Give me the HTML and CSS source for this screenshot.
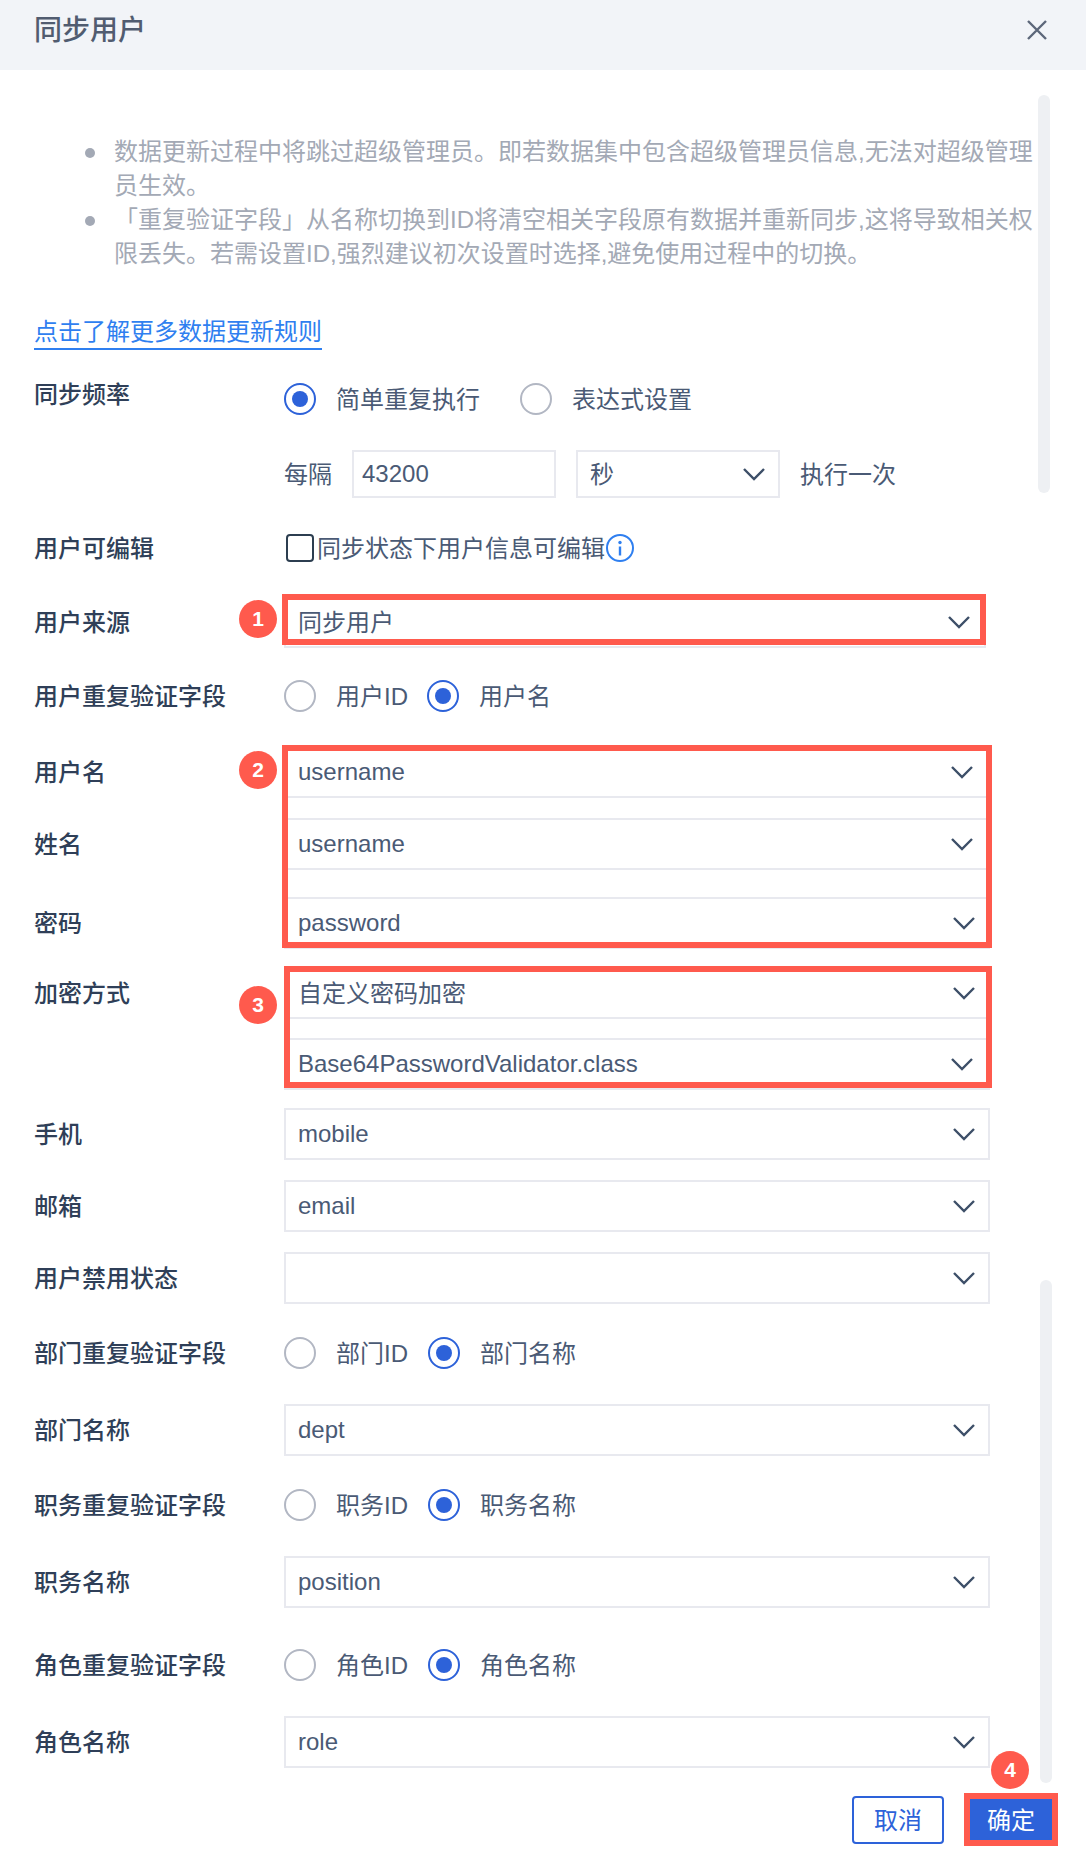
FILE: index.html
```html
<!DOCTYPE html>
<html lang="zh-CN">
<head>
<meta charset="utf-8">
<title>同步用户</title>
<link rel="stylesheet" href="styles.css">
</head>
<body>
<svg class="defs" width="0" height="0" aria-hidden="true">
  <symbol id="chev" viewBox="0 0 24 14"><path d="M2 2 L12 12 L22 2" fill="none" stroke="currentColor" stroke-width="2.4"/></symbol>
</svg>
<div class="dialog">
  <header class="head">
    <h1 class="title">同步用户</h1>
    <svg class="close" viewBox="0 0 22 22"><path d="M2 2 L20 20 M20 2 L2 20" fill="none" stroke="currentColor" stroke-width="2.4"/></svg>
  </header>
  <main class="body">
    <ul class="notes">
      <li>数据更新过程中将跳过超级管理员。即若数据集中包含超级管理员信息,无法对超级管理员生效。</li>
      <li>「重复验证字段」从名称切换到ID将清空相关字段原有数据并重新同步,这将导致相关权限丢失。若需设置ID,强烈建议初次设置时选择,避免使用过程中的切换。</li>
    </ul>
    <a class="more">点击了解更多数据更新规则</a>

    <div class="row m28 tall">
      <span class="label up">同步频率</span>
      <div class="radios wide">
        <label class="radio"><i class="dot on"></i><span class="cn">简单重复执行</span></label>
        <label class="radio"><i class="dot"></i><span class="cn">表达式设置</span></label>
      </div>
    </div>
    <div class="row m31 freq">
      <span class="label"></span>
      <div class="freq-line">
        <span class="cn">每隔</span>
        <div class="field num">43200</div>
        <div class="field unit"><span class="cn">秒</span><svg class="chev"><use href="#chev"/></svg></div>
        <span class="cn">执行一次</span>
      </div>
    </div>
    <div class="row m30 tall">
      <span class="label">用户可编辑</span>
      <div class="check">
        <i class="box"></i><span class="cn">同步状态下用户信息可编辑</span>
        <svg class="info" viewBox="0 0 28 28"><circle cx="14" cy="14" r="13" fill="none" stroke="currentColor" stroke-width="2"/><circle cx="14" cy="8.5" r="1.7" fill="currentColor"/><path d="M14 12.5 V21.5" stroke="currentColor" stroke-width="2.4"/></svg>
      </div>
    </div>
    <div class="row m28">
      <span class="label">用户来源</span>
      <div class="field select short"><span class="cn">同步用户</span><svg class="chev"><use href="#chev"/></svg></div>
    </div>
    <div class="row m28 tall">
      <span class="label">用户重复验证字段</span>
      <div class="radios narrow">
        <label class="radio"><i class="dot"></i><span class="cn">用户ID</span></label>
        <label class="radio"><i class="dot on"></i><span class="cn">用户名</span></label>
      </div>
    </div>
    <div class="row m30">
      <span class="label">用户名</span>
      <div class="field select inset">username<svg class="chev"><use href="#chev"/></svg></div>
    </div>
    <div class="row m20">
      <span class="label">姓名</span>
      <div class="field select inset">username<svg class="chev"><use href="#chev"/></svg></div>
    </div>
    <div class="row m27">
      <span class="label">密码</span>
      <div class="field select">password<svg class="chev"><use href="#chev"/></svg></div>
    </div>
    <div class="row m18">
      <span class="label">加密方式</span>
      <div class="field select"><span class="cn">自定义密码加密</span><svg class="chev"><use href="#chev"/></svg></div>
    </div>
    <div class="row m19">
      <span class="label"></span>
      <div class="field select inset">Base64PasswordValidator.class<svg class="chev"><use href="#chev"/></svg></div>
    </div>
    <div class="row m18">
      <span class="label">手机</span>
      <div class="field select">mobile<svg class="chev"><use href="#chev"/></svg></div>
    </div>
    <div class="row m20">
      <span class="label">邮箱</span>
      <div class="field select">email<svg class="chev"><use href="#chev"/></svg></div>
    </div>
    <div class="row m20">
      <span class="label">用户禁用状态</span>
      <div class="field select"><svg class="chev"><use href="#chev"/></svg></div>
    </div>
    <div class="row m29 tall">
      <span class="label">部门重复验证字段</span>
      <div class="radios">
        <label class="radio"><i class="dot"></i><span class="cn">部门ID</span></label>
        <label class="radio"><i class="dot on"></i><span class="cn">部门名称</span></label>
      </div>
    </div>
    <div class="row m31">
      <span class="label">部门名称</span>
      <div class="field select">dept<svg class="chev"><use href="#chev"/></svg></div>
    </div>
    <div class="row m29 tall">
      <span class="label">职务重复验证字段</span>
      <div class="radios">
        <label class="radio"><i class="dot"></i><span class="cn">职务ID</span></label>
        <label class="radio"><i class="dot on"></i><span class="cn">职务名称</span></label>
      </div>
    </div>
    <div class="row m31">
      <span class="label">职务名称</span>
      <div class="field select">position<svg class="chev"><use href="#chev"/></svg></div>
    </div>
    <div class="row m37 tall">
      <span class="label">角色重复验证字段</span>
      <div class="radios">
        <label class="radio"><i class="dot"></i><span class="cn">角色ID</span></label>
        <label class="radio"><i class="dot on"></i><span class="cn">角色名称</span></label>
      </div>
    </div>
    <div class="row m31">
      <span class="label">角色名称</span>
      <div class="field select">role<svg class="chev"><use href="#chev"/></svg></div>
    </div>
    <footer class="foot">
      <button class="btn ghost">取消</button>
      <button class="btn primary">确定</button>
    </footer>
  </main>

  <div class="scroll s1"></div>
  <div class="scroll s2"></div>

  <div class="mark m-1"></div>
  <div class="mark m-2"></div>
  <div class="mark m-3"></div>
  <div class="mark m-4"></div>
  <div class="badge b-1">1</div>
  <div class="badge b-2">2</div>
  <div class="badge b-3">3</div>
  <div class="badge b-4">4</div>
</div>
</body>
</html>
```
FILE: styles.css
```css
* { box-sizing: border-box; }
html, body { margin: 0; padding: 0; background: #fff; }
body {
  font-family: "Liberation Sans", "Noto Sans CJK SC", sans-serif;
  font-size: 24px;
  color: #4a5a75;
}
.defs { position: absolute; }
.dialog { position: relative; width: 1086px; height: 1854px; overflow: hidden; background: #fff; }

.head {
  height: 70px;
  background: #f2f4f8;
  display: flex;
  align-items: center;
  justify-content: space-between;
  padding: 0 38px 0 34px;
}
.title { margin: 0 0 8px; font-size: 28px; font-weight: 500; color: #515c70; line-height: 40px; }
.close { width: 22px; height: 22px; color: #5d677a; margin-bottom: 10px; }

.body { padding: 65px 0 0 34px; }
.notes {
  margin: 0;
  padding: 0 0 0 80px;
  width: 1006px;
  list-style: none;
  color: #a3a9b5;
  line-height: 34px;
}
.notes li { position: relative; }
.notes li::before {
  content: "";
  position: absolute;
  left: -29px;
  top: 13px;
  width: 10px;
  height: 10px;
  border-radius: 50%;
  background: #a3a9b5;
}
.more {
  display: block;
  width: 288px;
  margin-top: 44px;
  height: 35px;
  line-height: 34px;
  color: #2f7ff0;
  border-bottom: 2px solid #2f7ff0;
  white-space: nowrap;
}

.row { display: flex; align-items: center; height: 52px; }
.row.tall { height: 40px; }
.row.freq { height: 48px; }
.m18 { margin-top: 18px; }
.m19 { margin-top: 19px; }
.m20 { margin-top: 20px; }
.m27 { margin-top: 27px; }
.m28 { margin-top: 28px; }
.m29 { margin-top: 29px; }
.m30 { margin-top: 30px; }
.m31 { margin-top: 31px; }
.m37 { margin-top: 37px; }
.m28:first-of-type { margin-top: 29px; }

.cn { padding-bottom: 4px; }
.label { width: 250px; flex: none; color: #2f3f58; font-weight: 500; padding-bottom: 4px; }
.label.up { margin-top: -10px; }

.radios { display: flex; gap: 20px; color: #4a5a75; }
.radios.wide { gap: 40px; }
.radios.narrow { gap: 19px; }
.radio { display: flex; align-items: center; gap: 20px; }
.dot {
  width: 32px;
  height: 32px;
  border-radius: 50%;
  border: 2px solid #b2b7c3;
  display: flex;
  align-items: center;
  justify-content: center;
  flex: none;
}
.dot.on { border-color: #2d62d9; }
.dot.on::after { content: ""; width: 16px; height: 16px; border-radius: 50%; background: #2d62d9; }

.field {
  border: 2px solid #e8e9ef;
  height: 52px;
  display: flex;
  align-items: center;
  justify-content: space-between;
  padding: 0 12px 0 12px;
  background: #fff;
  color: #4a5a75;
}
.select { width: 706px; }
.select.inset { padding-right: 14px; }
.select.short { width: 702px; padding-right: 13px; }
.freq-line { display: flex; align-items: center; gap: 20px; }
.num { width: 204px; height: 48px; padding-left: 8px; }
.unit { width: 204px; height: 48px; }
.chev { width: 24px; height: 14px; color: #3d4f68; flex: none; margin-left: auto; }

.check { display: flex; align-items: center; color: #4a5a75; }
.box { width: 28px; height: 28px; border: 2.5px solid #2c3e50; border-radius: 4px; margin: 0 3px 0 2px; flex: none; }
.info { width: 28px; height: 28px; color: #2f7ff0; flex: none; margin-left: 1px; }

.foot { display: flex; justify-content: flex-end; align-items: center; gap: 26px; margin-top: 28px; padding-right: 34px; }
.btn { font: inherit; padding: 0 0 4px; border-radius: 4px; }
.ghost { width: 92px; height: 48px; background: #fff; border: 2px solid #2d62d9; color: #2d62d9; }
.primary { width: 82px; height: 44px; background: #2d62d9; border: none; border-radius: 0; color: #fff; }

.scroll { position: absolute; width: 12px; background: #eef0f3; border-radius: 6px; }
.s1 { left: 1038px; top: 95px; height: 398px; }
.s2 { left: 1040px; top: 1280px; height: 503px; }

.mark { position: absolute; border: 6px solid #ff5a4d; }
.m-1 { left: 282px; top: 594px; width: 704px; height: 51px; }
.m-2 { left: 282px; top: 745px; width: 710px; height: 203px; }
.m-3 { left: 284px; top: 966px; width: 708px; height: 122px; }
.m-4 { left: 964px; top: 1793px; width: 94px; height: 53px; }

.badge {
  position: absolute;
  width: 38px;
  height: 38px;
  border-radius: 50%;
  background: #ff5a4d;
  color: #fff;
  font-size: 21px;
  font-weight: 700;
  line-height: 37px;
  text-align: center;
}
.b-1 { left: 239px; top: 600px; }
.b-2 { left: 239px; top: 751px; }
.b-3 { left: 239px; top: 986px; }
.b-4 { left: 991px; top: 1751px; }
```
